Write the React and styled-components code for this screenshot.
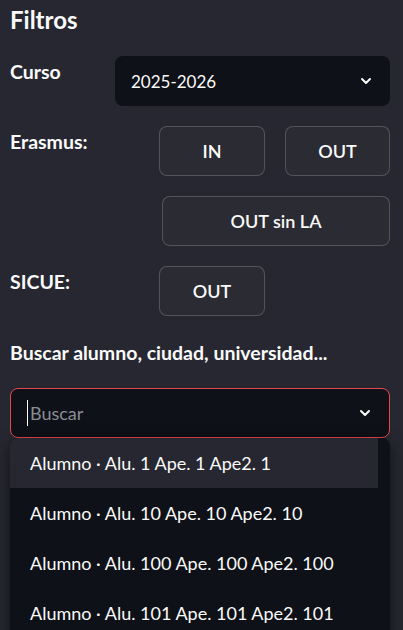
import React from "react";
import styled, { createGlobalStyle } from "styled-components";
import { ChevronDown } from "lucide-react";

const GlobalStyle = createGlobalStyle`
  html, body {
    margin: 0;
    padding: 0;
    background: #262730;
    overflow: hidden;
  }
  body {
    font-family: "Source Sans Pro", Lato, "Noto Sans", sans-serif;
    color: #fafafa;
  }
`;

const alumnos = [
    "Alumno · Alu. 1 Ape. 1 Ape2. 1",
    "Alumno · Alu. 10 Ape. 10 Ape2. 10",
    "Alumno · Alu. 100 Ape. 100 Ape2. 100",
    "Alumno · Alu. 101 Ape. 101 Ape2. 101",
];

function App() {
    return (
    <Sidebar>
        <GlobalStyle/>
        <Title>Filtros</Title>
        <Row cols="85px 275px" top={22}>
            <Label>Curso</Label>
            <Select>
                <span>2025-2026</span>
                <ChevronDown size={16} strokeWidth={3}/>
            </Select>
        </Row>
        <Row cols="129px 106px 105px" top={20}>
            <Label>Erasmus:</Label>
            <Btn>IN</Btn>
            <Btn>OUT</Btn>
        </Row>
        <Row cols="132px 228px" top={20}>
            <div/>
            <Btn>OUT sin LA</Btn>
        </Row>
        <Row cols="129px 106px 105px" top={20}>
            <Label>SICUE:</Label>
            <Btn>OUT</Btn>
        </Row>
        <SearchLabel>Buscar alumno, ciudad, universidad...</SearchLabel>
        <SearchWrap>
            <SearchBox>
                <Placeholder><Caret/>Buscar</Placeholder>
                <ChevronDown size={16} strokeWidth={3}/>
            </SearchBox>
            <Menu>
                {alumnos.map((a, i) => (
                    <Item key={a} active={i === 0}>{a}</Item>
                ))}
            </Menu>
        </SearchWrap>
    </Sidebar>
    );
};

const Sidebar = styled.div `
width: 380px;
height: 630px;
padding: 0 13px 0 10px;
`;

const Title = styled.h2 `
margin: 0;
padding-top: 6px;
font-size: 24px;
font-weight: 700;
line-height: 28px;
`;

const Row = styled.div `
display: grid;
grid-template-columns: ${props => props.cols};
column-gap: 20px;
margin-top: ${props => props.top}px;
`;

const Label = styled.div `
font-size: 19.5px;
font-weight: 700;
line-height: 24px;
padding-top: 4px;
`;

const Select = styled.div `
height: 50px;
box-sizing: border-box;
background: #0e1117;
border-radius: 8px;
display: flex;
align-items: center;
justify-content: space-between;
padding: 0 16px 0 16px;
font-size: 17px;
`;

const Btn = styled.button `
height: 50px;
border: 1px solid rgba(250, 250, 250, 0.2);
border-radius: 8px;
background: #2a2b33;
color: #fafafa;
font-family: inherit;
font-size: 18px;
font-weight: 600;
`;

const SearchLabel = styled.div `
margin-top: 25px;
font-size: 19.5px;
font-weight: 700;
line-height: 24px;
`;

const SearchWrap = styled.div `
position: relative;
margin-top: 23px;
`;

const SearchBox = styled.div `
height: 50px;
box-sizing: border-box;
background: #0e1117;
border: 1px solid #e6484f;
border-radius: 8px;
display: flex;
align-items: center;
justify-content: space-between;
padding: 0 16px 0 16px;
`;

const Placeholder = styled.div `
display: flex;
align-items: center;
font-size: 18px;
color: #8a8c94;
`;

const Caret = styled.span `
display: inline-block;
width: 1px;
height: 26px;
background: #fafafa;
margin-right: 2px;
`;

const Menu = styled.div `
position: absolute;
top: 50px;
left: 0;
right: 0;
min-height: 260px;
background: #0e1117;
border-radius: 8px;
padding-right: 12px;
box-shadow: 0 4px 16px rgba(0, 0, 0, 0.5);
overflow: hidden;
`;

const Item = styled.div `
height: 50px;
display: flex;
align-items: center;
padding-left: 20px;
font-size: 18px;
background: ${props => props.active ? "#262730" : "transparent"};
`;

export default App;
